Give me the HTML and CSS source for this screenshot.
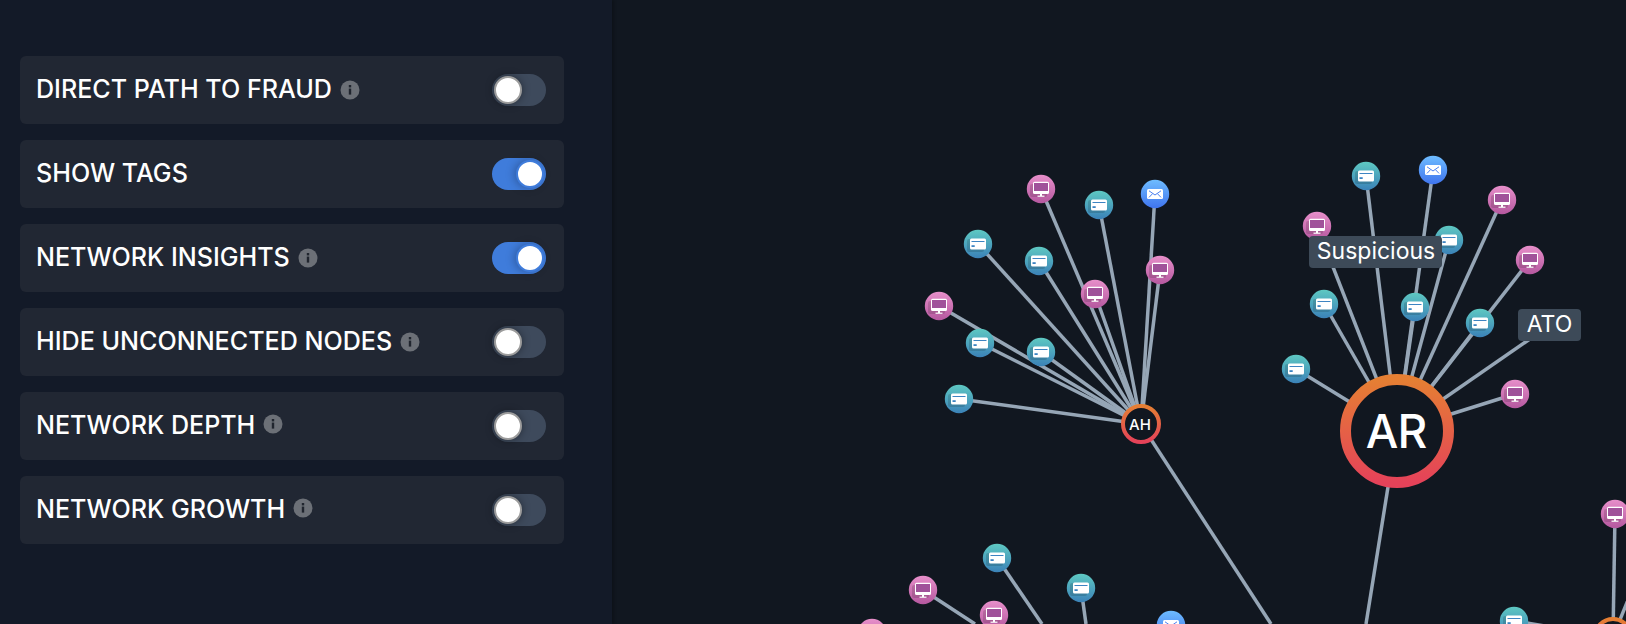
FILE: index.html
```html
<!DOCTYPE html>
<html lang="en">
  <head>
    <meta charset="UTF-8" />
    <title>Network graph</title>
    <link rel="stylesheet" href="styles.css">
  </head>
  <body>
    <div class="sidebar">
      <div class="option">
        <div class="option-name"><span>DIRECT PATH TO FRAUD</span> <svg class="info" viewBox="0 0 20 20"><use href="#info" /></svg></div>
        <div class="toggle"><div class="knob"></div></div>
      </div>
      <div class="option">
        <div class="option-name"><span>SHOW TAGS</span></div>
        <div class="toggle on"><div class="knob"></div></div>
      </div>
      <div class="option">
        <div class="option-name"><span>NETWORK INSIGHTS</span> <svg class="info" viewBox="0 0 20 20"><use href="#info" /></svg></div>
        <div class="toggle on"><div class="knob"></div></div>
      </div>
      <div class="option">
        <div class="option-name"><span>HIDE UNCONNECTED NODES</span> <svg class="info" viewBox="0 0 20 20"><use href="#info" /></svg></div>
        <div class="toggle"><div class="knob"></div></div>
      </div>
      <div class="option">
        <div class="option-name"><span>NETWORK DEPTH</span> <svg class="info raised" viewBox="0 0 20 20"><use href="#info" /></svg></div>
        <div class="toggle"><div class="knob"></div></div>
      </div>
      <div class="option">
        <div class="option-name"><span>NETWORK GROWTH</span> <svg class="info raised" viewBox="0 0 20 20"><use href="#info" /></svg></div>
        <div class="toggle"><div class="knob"></div></div>
      </div>
    </div>

    <div class="main">
      <svg class="graph" viewBox="612 0 1014 624">
        <defs>
          <linearGradient id="teal" x1="0" y1="0" x2="0" y2="1">
            <stop offset="0" stop-color="#5ec8c2" />
            <stop offset="1" stop-color="#3b82b8" />
          </linearGradient>
          <linearGradient id="pink" x1="0" y1="0" x2="0" y2="1">
            <stop offset="0" stop-color="#e78fca" />
            <stop offset="1" stop-color="#b5589f" />
          </linearGradient>
          <linearGradient id="blue" x1="0" y1="0" x2="0" y2="1">
            <stop offset="0" stop-color="#6ebcff" />
            <stop offset="1" stop-color="#3f74ee" />
          </linearGradient>
          <linearGradient id="ring" x1="0" y1="0" x2="0" y2="1">
            <stop offset="0" stop-color="#e57f33" />
            <stop offset="1" stop-color="#e54259" />
          </linearGradient>

          <g id="info">
            <circle cx="10" cy="10" r="9.5" fill="#6c7077" />
            <rect x="8.8" y="8.6" width="2.4" height="6" fill="#20252e" />
            <rect x="8.8" y="5" width="2.4" height="2.4" fill="#20252e" />
          </g>

          <g id="card-node">
            <circle r="14.2" fill="url(#teal)" />
            <rect x="-11" y="-5" width="17" height="13" rx="2" fill="#000" opacity="0.14" />
            <rect x="-8" y="-5.5" width="16" height="11" rx="1.5" fill="#fff" />
            <rect x="-6.5" y="-3" width="13" height="1" fill="#3d84c2" />
            <rect x="-6.5" y="1.2" width="3.2" height="1.8" fill="#3d84c2" />
          </g>
          <g id="monitor-node">
            <circle r="14.2" fill="url(#pink)" />
            <rect x="-11" y="-5" width="17" height="13" rx="2" fill="#000" opacity="0.14" />
            <rect x="-8" y="-7.3" width="16" height="12.3" rx="1.5" fill="#fff" />
            <rect x="-7" y="-6" width="14" height="8" fill="#a0529a" />
            <rect x="-1" y="5" width="2" height="2" fill="#fff" />
            <rect x="-3.5" y="6.6" width="7" height="1.2" fill="#fff" />
          </g>
          <g id="mail-node">
            <circle r="14.2" fill="url(#blue)" />
            <rect x="-8" y="-5" width="16" height="10" rx="1.5" fill="#fff" />
            <path d="M-6 -3.2 L0 1 L6 -3.2 M-6 3.4 L-2.4 -0.4 M6 3.4 L2.4 -0.4" fill="none" stroke="#4a7ff0" stroke-width="1" />
          </g>
        </defs>

        <g class="links">
          <line x1="1141" y1="424" x2="1041" y2="189" />
          <line x1="1141" y1="424" x2="1099" y2="205" />
          <line x1="1141" y1="424" x2="1155" y2="194" />
          <line x1="1141" y1="424" x2="978" y2="244" />
          <line x1="1141" y1="424" x2="1039" y2="261" />
          <line x1="1141" y1="424" x2="1160" y2="270" />
          <line x1="1141" y1="424" x2="1095" y2="294" />
          <line x1="1141" y1="424" x2="939" y2="306" />
          <line x1="1141" y1="424" x2="980" y2="343" />
          <line x1="1141" y1="424" x2="1041" y2="352" />
          <line x1="1141" y1="424" x2="959" y2="399" />
          <line x1="1141" y1="424" x2="1271" y2="624" />

          <line x1="1397" y1="431" x2="1366" y2="176" />
          <line x1="1397" y1="431" x2="1433" y2="170" />
          <line x1="1397" y1="431" x2="1502" y2="200" />
          <line x1="1397" y1="431" x2="1317" y2="226" />
          <line x1="1397" y1="431" x2="1449" y2="240" />
          <line x1="1397" y1="431" x2="1530" y2="260" />
          <line x1="1397" y1="431" x2="1324" y2="304" />
          <line x1="1397" y1="431" x2="1415" y2="307" />
          <line x1="1397" y1="431" x2="1480" y2="323" />
          <line x1="1397" y1="431" x2="1296" y2="369" />
          <line x1="1397" y1="431" x2="1515" y2="394" />
          <line x1="1397" y1="431" x2="1550" y2="325" />
          <line x1="1397" y1="431" x2="1366" y2="624" />

          <line x1="923" y1="590" x2="975" y2="624" />
          <line x1="997" y1="558" x2="1042" y2="624" />
          <line x1="1081" y1="588" x2="1086" y2="624" />
          <line x1="1615" y1="514" x2="1613" y2="637" />
          <line x1="1514" y1="621" x2="1613" y2="637" />
          <line x1="1630" y1="595" x2="1613" y2="637" />
        </g>

        <use href="#monitor-node" x="1041" y="189" />
        <use href="#card-node" x="1099" y="205" />
        <use href="#mail-node" x="1155" y="194" />
        <use href="#card-node" x="978" y="244" />
        <use href="#card-node" x="1039" y="261" />
        <use href="#monitor-node" x="1160" y="270" />
        <use href="#monitor-node" x="1095" y="294" />
        <use href="#monitor-node" x="939" y="306" />
        <use href="#card-node" x="980" y="343" />
        <use href="#card-node" x="1041" y="352" />
        <use href="#card-node" x="959" y="399" />

        <use href="#card-node" x="1366" y="176" />
        <use href="#mail-node" x="1433" y="170" />
        <use href="#monitor-node" x="1502" y="200" />
        <use href="#monitor-node" x="1317" y="226" />
        <use href="#card-node" x="1449" y="240" />
        <use href="#monitor-node" x="1530" y="260" />
        <use href="#card-node" x="1324" y="304" />
        <use href="#card-node" x="1415" y="307" />
        <use href="#card-node" x="1480" y="323" />
        <use href="#card-node" x="1296" y="369" />
        <use href="#monitor-node" x="1515" y="394" />

        <use href="#card-node" x="997" y="558" />
        <use href="#monitor-node" x="923" y="590" />
        <use href="#card-node" x="1081" y="588" />
        <use href="#monitor-node" x="994" y="615" />
        <use href="#monitor-node" x="872" y="633" />
        <use href="#mail-node" x="1171" y="625" />
        <use href="#monitor-node" x="1615" y="514" />
        <use href="#card-node" x="1514" y="621" />

        <circle class="person small" cx="1141" cy="424" r="18" />
        <text class="person-name small" x="1140" y="430">AH</text>
        <circle class="person big" cx="1397" cy="431" r="51.5" />
        <text class="person-name big" x="1396" y="448">AR</text>
        <circle class="person small" cx="1613" cy="637" r="18" />

        <rect class="tag" x="1309" y="236" width="133" height="32" rx="4" />
        <text class="tag-text" x="1376" y="259">Suspicious</text>
        <rect class="tag" x="1518" y="309" width="63" height="32" rx="4" />
        <text class="tag-text" x="1549.5" y="332">ATO</text>
      </svg>
    </div>
  </body>
</html>
```

FILE: styles.css
```css
* {
  margin: 0;
  padding: 0;
  box-sizing: border-box;
  font-family: "Inter", sans-serif;
}
body {
  background-color: #111720;
  color: white;
  display: flex;
  height: 100vh;
  overflow: hidden;
}
.sidebar {
  width: 612px;
  flex-shrink: 0;
  background-color: #131a28;
  padding: 56px 48px 0 20px;
  display: flex;
  flex-direction: column;
  gap: 16px;
  box-shadow: 2px 0 3px rgba(0, 0, 0, 0.25);
  z-index: 1;
}
.option {
  height: 68px;
  background-color: #212733;
  border-radius: 6px;
  padding: 0 18px 0 16px;
  display: flex;
  align-items: center;
  justify-content: space-between;
}
.option-name {
  display: flex;
  align-items: center;
  gap: 8px;
  font-size: 25.1px;
  font-weight: 500;
  color: #fff;
}
.option-name span {
  margin-top: -3px;
}
.info {
  width: 20px;
  height: 20px;
}
.info.raised {
  margin-top: -4px;
}
.toggle {
  width: 54px;
  height: 32px;
  border-radius: 16px;
  background-color: #3e4a5c;
  display: flex;
  align-items: center;
  padding: 0 2px;
}
.toggle.on {
  background-color: #3f7cdb;
  justify-content: flex-end;
}
.knob {
  width: 28px;
  height: 28px;
  border-radius: 50%;
  background-color: #fff;
  border: 2px solid #9c9c9c;
  box-shadow: 0 0 8px rgba(0, 0, 0, 0.4);
}
.toggle.on .knob {
  border-color: #3f7cdb;
  box-shadow: -2px 0 8px rgba(0, 0, 0, 0.25);
}
.main {
  flex: 1;
}
.graph {
  display: block;
  width: 1014px;
  height: 624px;
}
.links line {
  stroke: #96a6b6;
  stroke-width: 3.5;
}
.person {
  fill: #111720;
  stroke: url(#ring);
}
.person.small {
  stroke-width: 4;
}
.person.big {
  stroke-width: 11;
}
.person-name {
  fill: #fff;
  text-anchor: middle;
  font-weight: 500;
}
.person-name.small {
  font-size: 15px;
}
.person-name.big {
  font-size: 46px;
  letter-spacing: -1px;
}
.tag {
  fill: #3d4a58;
}
.tag-text {
  fill: #fff;
  text-anchor: middle;
  font-size: 23px;
}
```
